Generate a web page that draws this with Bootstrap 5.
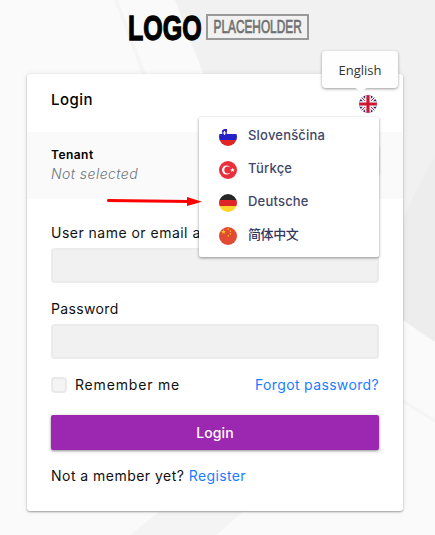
<!DOCTYPE html>
<html lang="en">
<head>
<meta charset="utf-8">
<meta name="viewport" content="width=device-width, initial-scale=1">
<title>Login</title>
<link href="https://cdn.jsdelivr.net/npm/bootstrap@5.3.0/dist/css/bootstrap.min.css" rel="stylesheet">
<style>
body{width:435px;height:535px;overflow:hidden;background:#fafafa;color:#111;font:400 14px/21px Inter,"Noto Sans CJK SC",sans-serif;letter-spacing:.35px}
.backdrop{z-index:-1}
.brand{height:74px}
.login-card{width:376px;height:437px;margin-left:27px;border-radius:3px;background:#fff;box-shadow:0 1px 2px rgba(0,0,0,.35),0 0 6px rgba(0,0,0,.08)}
.login-head{height:58px;padding:15px 24px 0}
.login-head h1{font-size:15px;line-height:22px;font-weight:500;letter-spacing:.5px;color:#000}
.flag{width:18px;height:18px;flex:none;border-radius:50%;display:block}
.head-flag{margin:6px 2px 0 0}
.tenant{height:67px;background:#fafafa;padding:14px 24px 0}
.tenant-name{font-size:12px;line-height:18px;font-weight:600;letter-spacing:.45px;color:#000}
.tenant-value{line-height:19px;font-style:italic;color:#6c757d;font-weight:300;letter-spacing:.45px}
.switch-btn{width:60px;height:30px;border-radius:3px;margin-top:-1px;background:#fafafa;box-shadow:0 1px 2px rgba(0,0,0,.35)}
.login-body{padding:23px 24px 0}
.login-body label{line-height:21px}
.field{height:35px;margin-top:5px;background:#f1f1f1;border:2px solid #ebebeb;border-radius:4px;padding:0 8px}
.field-group{height:61px;margin-bottom:15px}
.user-label{letter-spacing:.48px}
.remember-label{letter-spacing:.82px}
.login-body .tick{width:16px;height:16px;margin:0 8px 0 0;background-color:#f4f4f4;border:2px solid #e9e9e9;border-radius:4px}
.options{height:21px}
.link{color:#1a7dff;text-decoration:none}
.login-btn{height:35px;margin-top:20px;padding:0;line-height:33px;font-size:14px;font-weight:500;color:#fff;background:#9c27b0;border:0;border-radius:2px;box-shadow:0 1px 3px rgba(0,0,0,.45);letter-spacing:.1px}
.signup{margin-top:15px}
.signup span{letter-spacing:.47px}
.lang-menu{left:199px;top:117px;width:180px;height:140px;background:#fff;border-radius:2px;box-shadow:0 1px 3px rgba(0,0,0,.42);padding:2px 20px;z-index:2}
.lang-item{height:33px;gap:11px;color:#3f4769;font-size:13px;font-weight:500;line-height:33px;letter-spacing:.2px}
.lang-item .flag{margin-top:3px}
.cjk{font-family:"Noto Sans CJK SC",sans-serif;letter-spacing:-.4px;line-height:31px;margin-top:-2px;color:#30385f}
.bubble{left:322px;top:51px;width:76px;height:37px;background:#fefefe;border-radius:4px;box-shadow:0 1px 3px rgba(0,0,0,.4);z-index:3;font:13px/39px "Open Sans",sans-serif;color:#333;letter-spacing:0}
.bubble::after{content:"";position:absolute;left:32px;top:36px;border:7px solid transparent;border-top:5px solid #fefefe;border-bottom:0}
.pointer{left:106px;top:194px;z-index:4}
</style>
</head>
<body class="position-relative">
<svg class="backdrop position-absolute top-0 start-0" width="435" height="535" aria-hidden="true">
  <path d="M175 0H435V342L403 320L203 73Z" fill="#f1f1f1"/>
  <path d="M435 155L403 217V320L435 342Z" fill="#ededed"/>
  <path d="M114 0h4l28 74h-4ZM403 399l32 20v4l-32-20Z" fill="#f5f5f5"/>
  <path d="M160 511h84l-28 24h-86Z" fill="#f4f4f4"/>
</svg>

<header class="brand">
  <svg width="435" height="60" role="img" aria-label="Logo placeholder">
    <text transform="translate(128 39.600) scale(.695 1)" font-family="Liberation Sans" font-weight="700" font-size="36" letter-spacing="0" fill="#000" stroke="#000" stroke-width="1.300">LOGO</text>
    <rect x="207" y="15" width="101" height="24" fill="none" stroke="#999" stroke-width="2"/>
    <text transform="translate(213.500 33.300) scale(.677 1)" font-family="Liberation Sans" font-size="17.500" letter-spacing="0" fill="#707070" stroke="#707070" stroke-width=".7">PLACEHOLDER</text>
  </svg>
</header>

<main class="login-card">
  <div class="login-head d-flex justify-content-between align-items-start">
    <h1 class="m-0">Login</h1>
    <svg class="flag head-flag" viewBox="0 0 18 18">
      <path fill="#25356b" d="M0 0h18v18H0z"/>
      <path d="M0 0l18 18M18 0L0 18" stroke="#fff" stroke-width="3.200"/>
      <path d="M0 0l18 18M18 0L0 18" stroke="#d22241" stroke-width="1"/>
      <path d="M9 0v18M0 9h18" stroke="#fff" stroke-width="5.600"/>
      <path d="M9 0v18M0 9h18" stroke="#cf1732" stroke-width="3.200"/>
    </svg>
  </div>
  <section class="tenant d-flex justify-content-between">
    <div>
      <div class="tenant-name">Tenant</div>
      <div class="tenant-value">Not selected</div>
    </div>
    <div class="switch-btn"></div>
  </section>
  <form class="login-body">
    <div class="field-group">
      <label class="user-label d-block text-nowrap" for="user">User name or email address</label>
      <input id="user" class="field w-100 d-block" type="text">
    </div>
    <div class="field-group">
      <label class="d-block" for="pass">Password</label>
      <input id="pass" class="field w-100 d-block" type="password">
    </div>
    <div class="options d-flex align-items-center justify-content-between">
      <div class="d-flex align-items-center">
        <input id="remember" class="form-check-input tick" type="checkbox">
        <label class="remember-label" for="remember">Remember me</label>
      </div>
      <a class="link" href="#">Forgot password?</a>
    </div>
    <button class="btn login-btn w-100 d-block" type="button">Login</button>
    <div class="signup"><span>Not a member yet? </span><a class="link" href="#">Register</a></div>
  </form>
</main>

<div class="lang-menu position-absolute">
  <div class="lang-item d-flex align-items-center">
    <svg class="flag" viewBox="0 0 18 18"><path fill="#fff" d="M0 0h18v6H0z"/><path fill="#2521c7" d="M0 6h18v6H0zM3 1h5v5H3z"/><path fill="#df2526" d="M0 12h18v6H0z"/><path d="M5.500 3v4M3.500 5h4" stroke="#eee" stroke-width="1.200"/></svg>
    <span>Slovenščina</span>
  </div>
  <div class="lang-item d-flex align-items-center">
    <svg class="flag" viewBox="0 0 18 18"><path fill="#e92f3b" d="M0 0h18v18H0z"/><circle cx="7.500" cy="9" r="4.500" fill="#fff"/><circle cx="8.900" cy="9" r="3.600" fill="#e92f3b"/><path fill="#fff" d="M13.500 6.800l.6 1.500 1.700.1-1.300 1 .4 1.600-1.400-.9-1.400.9.400-1.600-1.300-1 1.700-.1z"/></svg>
    <span>Türkçe</span>
  </div>
  <div class="lang-item d-flex align-items-center">
    <svg class="flag" viewBox="0 0 18 18"><path fill="#272727" d="M0 0h18v6H0z"/><path fill="#df2526" d="M0 6h18v6H0z"/><path fill="#ffd52c" d="M0 12h18v6H0z"/></svg>
    <span>Deutsche</span>
  </div>
  <div class="lang-item d-flex align-items-center">
    <svg class="flag" viewBox="0 0 18 18"><path fill="#e24a34" d="M0 0h18v18H0z"/><path fill="#ffd016" d="M4.500 2.500l.6 1.500 1.700.1-1.300 1 .4 1.700-1.400-.9-1.400.9.400-1.700-1.300-1 1.700-.1zM8.500 1.500h1.300v1.300H8.500zM10.800 3.500h1.200v1.300h-1.200zM10.800 6.300h1.200v1.200h-1.200zM8.700 8.200h1.300v1.200H8.700z"/></svg>
    <span class="cjk">简体中文</span>
  </div>
</div>

<div class="bubble position-absolute text-center">English</div>

<svg class="pointer position-absolute" width="98" height="16" aria-hidden="true">
  <path d="M2.500 6.500L84 7.600" stroke="#f00" stroke-width="3" stroke-linecap="round"/>
  <path d="M81 3L96 7.800 81 12Z" fill="#f00"/>
</svg>
<script src="https://cdn.jsdelivr.net/npm/bootstrap@5.3.0/dist/js/bootstrap.bundle.min.js"></script>
</body>
</html>
